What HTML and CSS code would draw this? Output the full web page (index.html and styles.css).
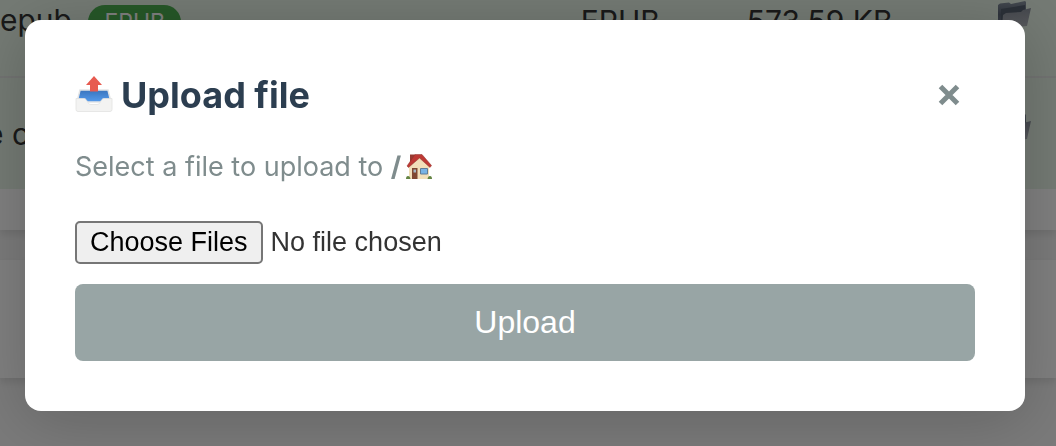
FILE: index.html
```html
<!DOCTYPE html>
<html lang="en">
<head>
<meta charset="utf-8">
<title>Upload file</title>
<link rel="stylesheet" href="styles.css">
</head>
<body>
<svg class="defs" aria-hidden="true">
  <defs>
    <linearGradient id="front" x1="0" y1="0" x2="0" y2="1"><stop offset="0" stop-color="#8b919c"/><stop offset="1" stop-color="#b0b3ba"/></linearGradient>
    <linearGradient id="back" x1="0" y1="0" x2="0" y2="1"><stop offset="0" stop-color="#8a94a1"/><stop offset=".5" stop-color="#5c6677"/><stop offset="1" stop-color="#788190"/></linearGradient>
    <linearGradient id="tray" x1="0" y1="0" x2="0" y2="1"><stop offset="0" stop-color="#3974bd"/><stop offset="1" stop-color="#559bec"/></linearGradient>
    <symbol id="folder" viewBox="0 0 36 28">
      <path d="M1 4 3 2.500 12 1.500 14 3 28 0 29 1V9L5 27 1 25z" fill="url(#back)"/>
      <path d="M4 8 28 4V10L4 22z" fill="#56606f"/>
      <path d="M6 14 9 12 24 11 26 9 34 7 30 25 5 27z" fill="url(#front)"/>
    </symbol>
  </defs>
</svg>
<main class="page">
  <section class="card files">
    <table class="file-table">
      <tbody>
        <tr>
          <td class="name">epub <span class="badge">EPUB</span></td>
          <td class="type">EPUB</td>
          <td class="size">573.59 KB</td>
          <td class="action"><button class="move" aria-label="Move"><svg class="folder"><use href="#folder"/></svg></button></td>
        </tr>
        <tr>
          <td class="name clipped">e c</td>
          <td class="type"></td>
          <td class="size"></td>
          <td class="action"><button class="move" aria-label="Move"><svg class="folder"><use href="#folder"/></svg></button></td>
        </tr>
      </tbody>
    </table>
  </section>
  <section class="card footer"></section>
</main>
<div class="overlay">
  <div class="modal" role="dialog" aria-modal="true" aria-labelledby="title">
    <header class="modal-header">
      <h3 class="title" id="title">
        <svg class="outbox" viewBox="0 0 38 38" aria-hidden="true">
          <path d="M5 14H33L36 26H2z" fill="url(#tray)" stroke="#e4e5e6" stroke-width="1.500"/>
          <path d="M19 0 27 9H23V15.500H15V9H11z" fill="#e75b50"/>
          <path d="M1 22.500H9C12.500 22.500 12 28.500 16 28.500H22C26 28.500 25.500 22.500 29 22.500H37V33.500Q37 35.500 35 35.500H3Q1 35.500 1 33.500z" fill="#f3f3f2" stroke="#e2e2e1" stroke-width=".8"/>
        </svg>
        Upload file
      </h3>
      <button class="close" aria-label="Close"><svg class="cross" viewBox="0 0 22 22"><path d="M2.500 2.500 19.500 19.500M19.500 2.500 2.500 19.500" stroke="currentColor" stroke-width="5"/></svg></button>
    </header>
    <p class="hint"><span>Select a file to upload to <strong>/</strong></span>
      <svg class="house" viewBox="0 0 28 28" aria-hidden="true">
        <path d="M5 1.500H10V10H5z" fill="#963b31"/>
        <path d="M4 13 14 4 24 13V26H4z" fill="#f2dfb9"/>
        <path d="M10 1.500H17L26.500 12.500 25 14.500 14.500 5 3.500 14.500 2 13z" fill="#bd3934" stroke="#8e302b" stroke-width=".5"/>
        <path d="M7 15H12.500V26H7z" fill="#804831"/>
        <path d="M8.500 16.500H11V19.500H8.500z" fill="#a8b8c4"/>
        <path d="M15.500 15.500H22.500V21H15.500z" fill="#79b4e6" stroke="#607c98"/>
        <path d="M1 26Q1 23 3 23 5 23 5.500 26zM22.500 26Q23 23 25 23 27 23 27 26z" fill="#648443"/>
      </svg>
    </p>
    <form class="form">
      <input class="picker" type="file" multiple aria-label="Files to upload">
      <button class="submit" type="button">Upload</button>
    </form>
  </div>
</div>
</body>
</html>
```
FILE: styles.css
```css
* { box-sizing: border-box; }
body {
  margin: 0;
  height: 100vh;
  overflow: hidden;
  background: #f5f5f5;
  color: #333;
  font-family: Inter, "Liberation Sans", sans-serif;
  font-size: 30px;
}
.defs { position: absolute; width: 0; height: 0; }
.page {
  display: flex;
  flex-direction: column;
  gap: 30px;
  margin-top: -35px;
}
.card {
  background: #fff;
  box-shadow: 0 4px 8px rgba(0, 0, 0, 0.1);
}
.files { padding-bottom: 41px; }
.footer { min-height: 118px; }
.file-table {
  width: 100%;
  table-layout: fixed;
  border-collapse: collapse;
  background: #e8f5e8;
}
.file-table td { height: 112px; padding: 0; }
.file-table tr + tr { border-top: 2px solid #e3e6e3; }
.name { width: 55%; white-space: nowrap; }
.name.clipped { text-indent: -14px; }
.type { width: 166px; }
.action { text-align: right; }
.badge {
  display: inline-block;
  margin-left: 8px;
  padding: 4px 16px;
  border-radius: 20px;
  background: #4caf50;
  color: #fff;
  font-size: 23px;
  line-height: 26px;
  vertical-align: 1px;
}
.move {
  padding: 0;
  margin-right: 23px;
  border: 0;
  background: none;
}
.folder { display: block; width: 36px; height: 28px; margin-bottom: 4px; }
.overlay {
  position: fixed;
  inset: 0;
  padding: 20px 31px 35px 25px;
  background: rgba(0, 0, 0, 0.5);
}
.modal {
  padding: 50px;
  border-radius: 16px;
  background: #fff;
  box-shadow: 0 8px 64px rgba(0, 0, 0, 0.2);
}
.modal-header {
  display: flex;
  align-items: center;
  justify-content: space-between;
  height: 50px;
}
.title {
  display: flex;
  align-items: center;
  gap: 8px;
  margin: 0;
  color: #2c3e50;
  font-size: 36px;
  line-height: 48px;
}
.outbox { width: 38px; height: 38px; }
.close {
  display: flex;
  padding: 15px;
  border: 0;
  background: none;
  color: #7f8c8d;
}
.cross { width: 22px; height: 22px; }
.hint {
  display: flex;
  align-items: center;
  gap: 4px;
  margin: 30px 0 38px;
  color: #7f8c8d;
  font-size: 27px;
  line-height: 33px;
}
.house { width: 28px; height: 28px; }
.form {
  display: flex;
  flex-direction: column;
  gap: 20px;
}
.picker {
  width: 100%;
  font: 27px/33px "Liberation Sans", Arial, sans-serif;
  color: #333;
}
.picker::file-selector-button {
  margin: 0 8px 0 0;
  padding: 3px 13px;
  border: 2px solid #767676;
  border-radius: 5px;
  background: #efefef;
  color: #000;
  font: inherit;
}
.submit {
  padding: 20px;
  border: 0;
  border-radius: 8px;
  background: #98a5a5;
  color: #fff;
  font: 32px/37px "Liberation Sans", Arial, sans-serif;
}
```
